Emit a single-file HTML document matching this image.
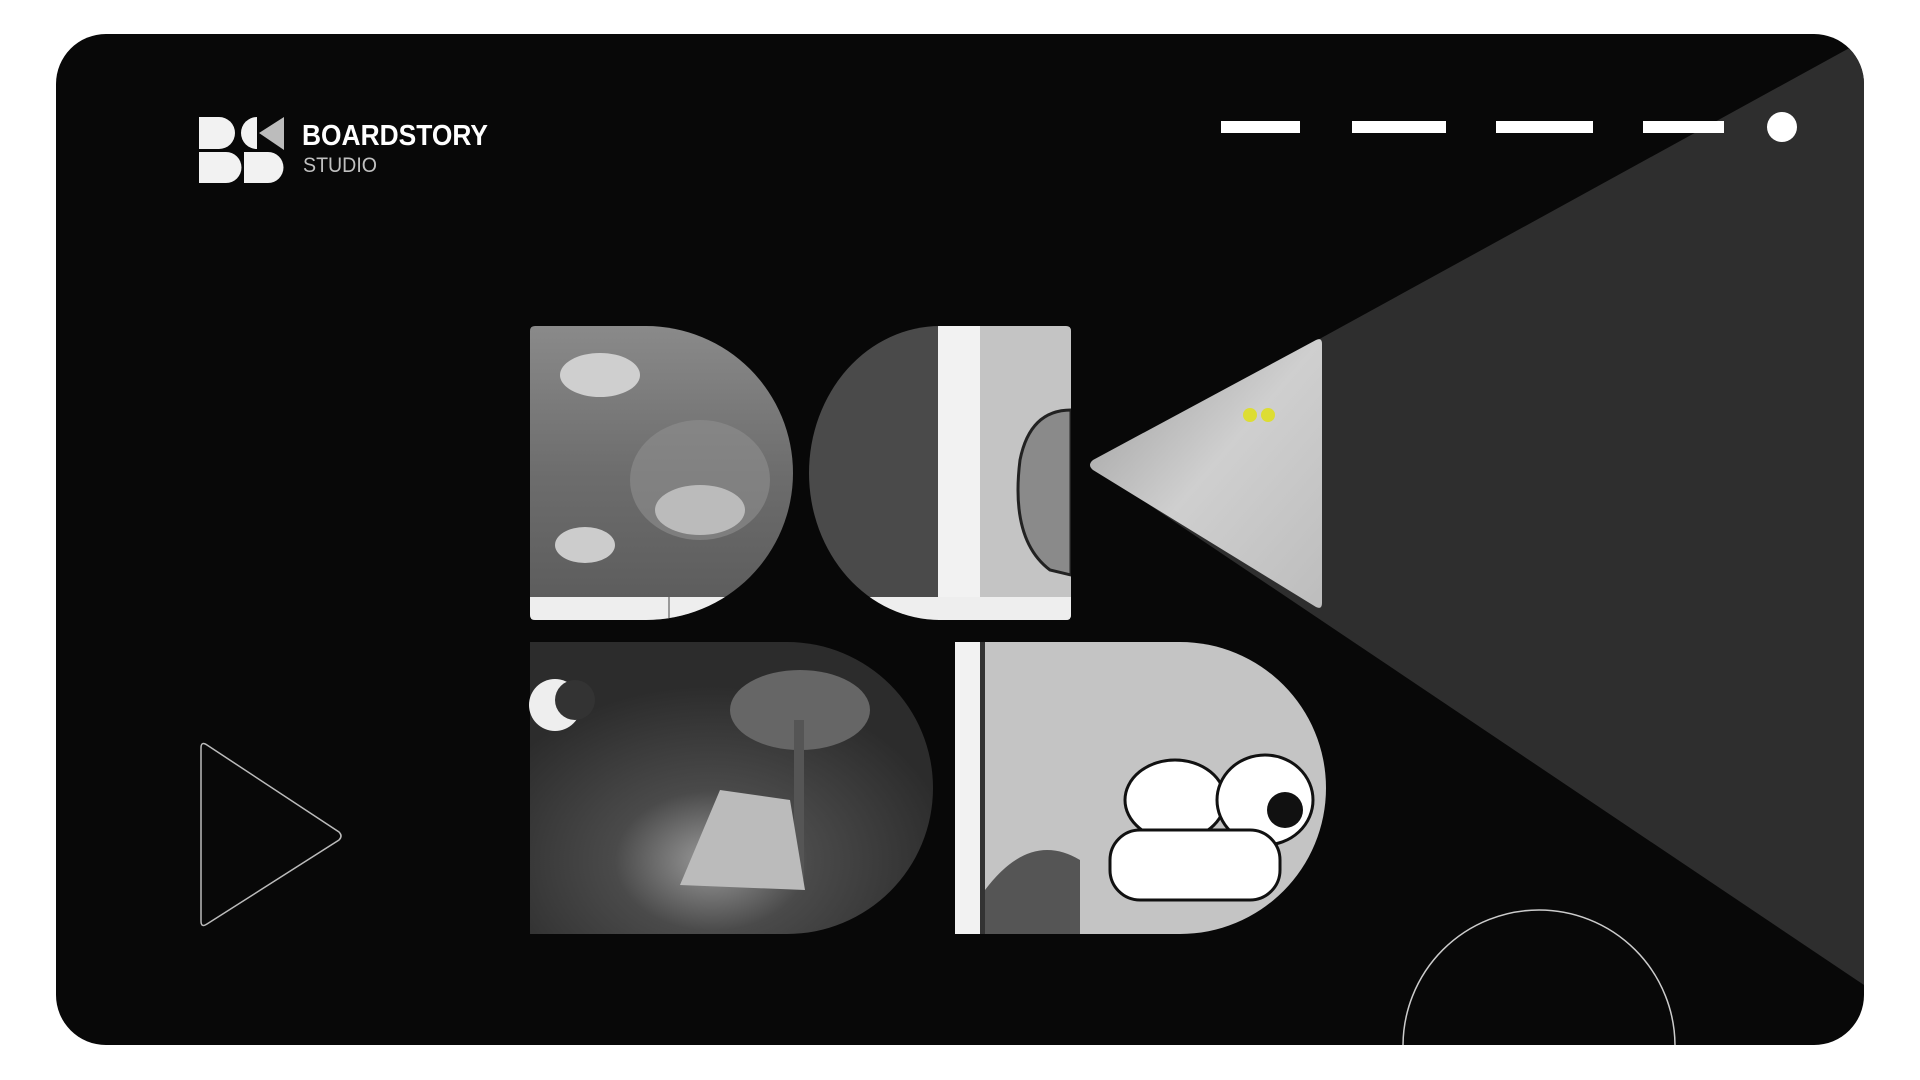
<!DOCTYPE html>
<html><head><meta charset="utf-8"><style>
html,body{margin:0;padding:0;background:#fff;width:1920px;height:1080px;overflow:hidden;font-family:"Liberation Sans",sans-serif}
.card{position:absolute;left:56px;top:34px;width:1808px;height:1011px;background:#080808;border-radius:50px;overflow:hidden}
.abs{position:absolute;display:block}
</style></head><body>
<div class="card"></div>
<svg class="abs" style="left:0;top:0" width="1920" height="1080">
<defs>
<clipPath id="cc"><rect x="56" y="34" width="1808" height="1011" rx="50"/></clipPath>
<clipPath id="t1"><path d="M535,326 H646 A147,147 0 0 1 646,620 H535 Q530,620 530,615 V331 Q530,326 535,326 Z"/></clipPath>
<clipPath id="t2"><path d="M940,326 H1066 Q1071,326 1071,331 V615 Q1071,620 1066,620 H940 A131,147 0 0 1 940,326 Z"/></clipPath>
<linearGradient id="g1" x1="0" y1="0" x2="0" y2="1"><stop offset="0" stop-color="#8a8a8a"/><stop offset="0.5" stop-color="#6d6d6d"/><stop offset="1" stop-color="#5a5a5a"/></linearGradient>
<radialGradient id="g4" cx="0.45" cy="0.75" r="0.6"><stop offset="0" stop-color="#9a9a9a"/><stop offset="0.4" stop-color="#4a4a4a"/><stop offset="1" stop-color="#2c2c2c"/></radialGradient>
<linearGradient id="g5" x1="0" y1="0" x2="1" y2="1"><stop offset="0" stop-color="#9a9a9a"/><stop offset="0.5" stop-color="#cfcfcf"/><stop offset="1" stop-color="#bdbdbd"/></linearGradient>
</defs>
<g clip-path="url(#cc)">
<polygon points="1864,40 1090,465 1864,985" fill="#2e2e2e"/>
<circle cx="1539" cy="1046" r="136" fill="none" stroke="#ccc" stroke-width="1.5"/>
</g>
<path d="M201,748 Q201,741 207,745 L339,832 Q343,836 339,840 L207,924 Q201,928 201,921 Z" fill="none" stroke="#bbb" stroke-width="1.5"/>
<g clip-path="url(#t1)">
<rect x="530" y="326" width="263" height="294" fill="url(#g1)"/>
<ellipse cx="700" cy="480" rx="70" ry="60" fill="#8f8f8f" opacity="0.6"/>
<ellipse cx="600" cy="375" rx="40" ry="22" fill="#cfcfcf"/>
<ellipse cx="700" cy="510" rx="45" ry="25" fill="#bbb"/>
<ellipse cx="585" cy="545" rx="30" ry="18" fill="#ccc"/>
<rect x="530" y="597" width="263" height="23" fill="#eee"/>
<rect x="668" y="597" width="2" height="23" fill="#999"/>
</g>
<g clip-path="url(#t2)">
<rect x="808" y="326" width="263" height="294" fill="#4a4a4a"/>
<rect x="938" y="326" width="42" height="294" fill="#f2f2f2"/>
<rect x="980" y="326" width="91" height="294" fill="#c4c4c4"/>
<path d="M1071,410 Q1030,410 1020,460 Q1010,540 1050,570 L1071,575 Z" fill="#8a8a8a" stroke="#222" stroke-width="3"/>
<rect x="808" y="597" width="263" height="23" fill="#eee"/>
</g>
<path d="M1093,460 L1316,340 Q1322,337 1322,344 V603 Q1322,610 1316,607 L1093,470 Q1087,465 1093,460 Z" fill="url(#g5)"/>
<circle cx="1250" cy="415" r="7" fill="#dd3"/><circle cx="1268" cy="415" r="7" fill="#dd3"/>
<path d="M530,642 H787 A146,146 0 0 1 787,934 H530 Z" fill="url(#g4)"/>
<circle cx="555" cy="705" r="26" fill="#eee"/><circle cx="575" cy="700" r="20" fill="#333"/>
<ellipse cx="800" cy="710" rx="70" ry="40" fill="#666"/>
<rect x="794" y="720" width="10" height="160" fill="#555"/>
<path d="M680,885 L720,790 L790,800 L805,890 Z" fill="#bbb"/>
<path d="M958,642 H1180 A146,146 0 0 1 1180,934 H958 Q955,934 955,931 V645 Q955,642 958,642 Z" fill="#c4c4c4"/>
<rect x="955" y="642" width="28" height="292" fill="#f2f2f2"/>
<rect x="980" y="642" width="5" height="292" fill="#333"/>
<ellipse cx="1175" cy="800" rx="50" ry="40" fill="#fff" stroke="#111" stroke-width="3"/>
<ellipse cx="1265" cy="800" rx="48" ry="45" fill="#fff" stroke="#111" stroke-width="3"/>
<circle cx="1285" cy="810" r="18" fill="#111"/>
<rect x="1110" y="830" width="170" height="70" rx="30" fill="#fff" stroke="#111" stroke-width="3"/>
<path d="M985,890 Q1030,830 1080,860 L1080,934 H985 Z" fill="#555"/>
<rect x="1221" y="121" width="79" height="12" fill="#fff"/>
<rect x="1352" y="121" width="94" height="12" fill="#fff"/>
<rect x="1496" y="121" width="97" height="12" fill="#fff"/>
<rect x="1643" y="121" width="81" height="12" fill="#fff"/>
<circle cx="1782" cy="127" r="15" fill="#fff"/>
<path d="M199,117 H219 A16,16 0 0 1 219,149 H199 Z" fill="#f2f2f2"/>
<path d="M241,133 A16,16 0 0 1 257,117 V149 A16,16 0 0 1 241,133 Z" fill="#f2f2f2"/>
<polygon points="259,133 284,117 284,150" fill="#bcbcbc"/>
<path d="M199,152 H226 A15.5,15.5 0 0 1 226,183 H199 Z" fill="#f2f2f2"/>
<path d="M244,152 H268 A15.5,15.5 0 0 1 268,183 H244 Z" fill="#f2f2f2"/>
<text x="302" y="145" font-family="Liberation Sans, sans-serif" font-weight="bold" font-size="29" fill="#fff" textLength="186" lengthAdjust="spacingAndGlyphs">BOARDSTORY</text>
<text x="303" y="172" font-family="Liberation Sans, sans-serif" font-size="21" fill="#c0c0c0" textLength="74" lengthAdjust="spacingAndGlyphs">STUDIO</text>
</svg>
</body></html>
